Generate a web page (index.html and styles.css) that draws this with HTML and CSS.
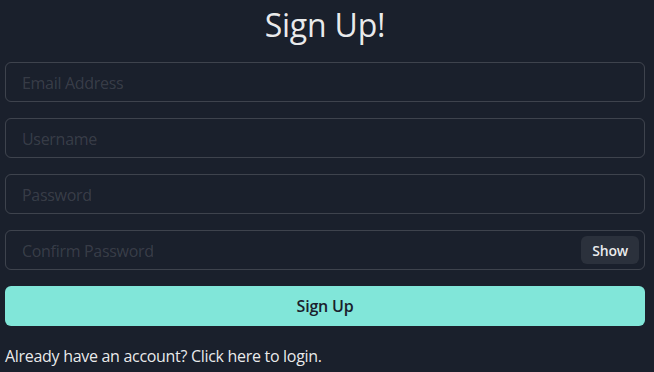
FILE: index.html
```html
<!DOCTYPE html>
<html>
<head>
<meta charset="utf-8">
<link rel="stylesheet" href="styles.css">
</head>
<body>
<div class="page">
  <h1 class="title">Sign Up!</h1>
  <form class="form">
    <div class="field"><input class="input" type="email" placeholder="Email Address"></div>
    <div class="field"><input class="input" type="text" placeholder="Username"></div>
    <div class="field"><input class="input" type="password" placeholder="Password"></div>
    <div class="field with-btn">
      <input class="input" type="password" placeholder="Confirm Password">
      <div class="right-el"><button type="button" class="show-btn">Show</button></div>
    </div>
    <button type="button" class="submit">Sign Up</button>
  </form>
  <p class="note">Already have an account? Click here to login.</p>
</div>
</body>
</html>
```
FILE: styles.css
```css
* { box-sizing: border-box; }
html, body { margin: 0; padding: 0; background: #1a202c; }
body {
  font-family: "Open Sans", "Noto Sans", sans-serif;
  color: rgba(255,255,255,0.92);
  letter-spacing: -0.3px;
}
.page {
  padding: 0 9px 0 5px;
  width: 654px;
}
.title {
  margin: 0;
  padding-top: 4px;
  height: 62px;
  text-align: center;
  font-weight: 400;
  font-size: 32px;
  line-height: 42px;
  letter-spacing: -0.2px;
}
.form {
  display: flex;
  flex-direction: column;
  gap: 16px;
  margin: 0;
}
.field { position: relative; }
.input {
  display: block;
  width: 100%;
  height: 40px;
  border: 1px solid rgba(255,255,255,0.16);
  border-radius: 6px;
  background: transparent;
  padding: 2px 16px 0;
  font-family: inherit;
  font-size: 16px;
  letter-spacing: -0.3px;
  color: rgba(255,255,255,0.92);
  outline: none;
}
.input::placeholder { color: rgba(255,255,255,0.14); }
.with-btn .input { padding-right: 72px; }
.right-el {
  position: absolute;
  top: 0;
  right: 0;
  width: 72px;
  height: 40px;
  display: flex;
  align-items: center;
  justify-content: flex-end;
  padding-right: 6px;
}
.show-btn {
  height: 28px;
  padding: 0 11px;
  border: none;
  border-radius: 6px;
  background: rgba(255,255,255,0.08);
  color: rgba(255,255,255,0.92);
  font-family: inherit;
  font-size: 14px;
  font-weight: 600;
  letter-spacing: -0.2px;
}
.submit {
  height: 40px;
  border: none;
  border-radius: 6px;
  background: #81e6d9;
  color: #1a202c;
  font-family: inherit;
  font-size: 16px;
  font-weight: 600;
  letter-spacing: -0.2px;
}
.note {
  margin: 18px 0 0;
  font-size: 16px;
  line-height: 24px;
}
```
